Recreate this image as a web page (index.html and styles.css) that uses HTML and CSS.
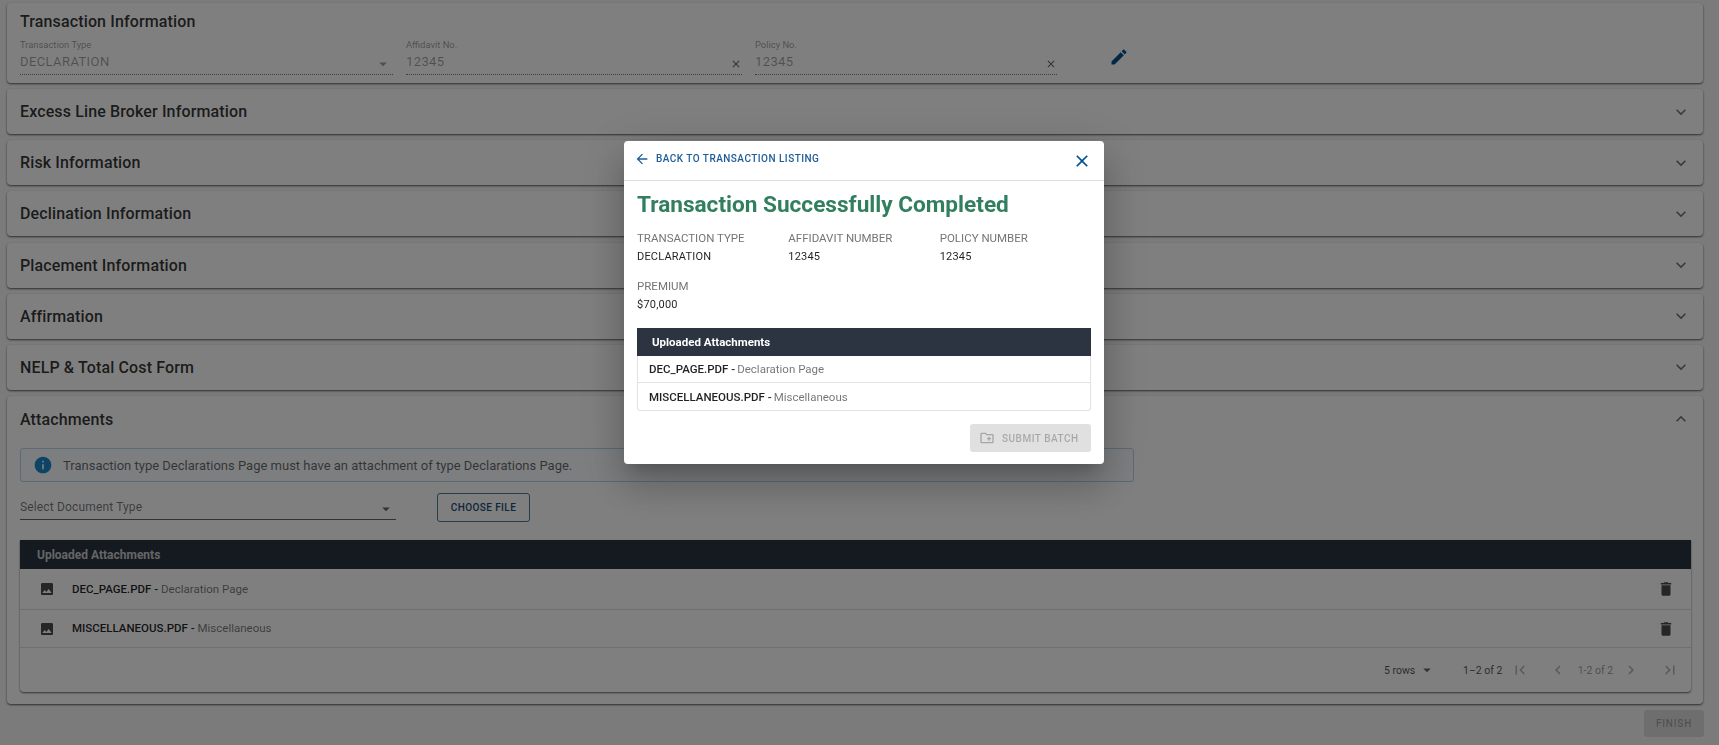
FILE: index.html
```html
<!DOCTYPE html>
<html lang="en">
<head>
  <meta charset="UTF-8" />
  <meta name="viewport" content="width=device-width, initial-scale=1.0"/>
  <title>Transaction</title>
  <link rel="stylesheet" href="styles.css">
</head>
<body>
  <div class="page">
    <section class="panel panel-first">
      <h2 class="panel-title first-title">Transaction Information</h2>
      <div class="fields">
        <div class="field field-type">
          <label>Transaction Type</label>
          <div class="field-value">
            <span>DECLARATION</span>
            <svg class="ico-caret" viewBox="0 0 24 24"><path d="M7 10l5 5 5-5z"/></svg>
          </div>
        </div>
        <div class="field field-affidavit">
          <label>Affidavit No.</label>
          <div class="field-value">
            <span>12345</span>
            <svg class="ico-clear" viewBox="0 0 24 24"><path d="M19 6.41L17.59 5 12 10.59 6.41 5 5 6.41 10.59 12 5 17.59 6.41 19 12 13.41 17.59 19 19 17.59 13.41 12z"/></svg>
          </div>
        </div>
        <div class="field field-policy">
          <label>Policy No.</label>
          <div class="field-value">
            <span>12345</span>
            <svg class="ico-clear" viewBox="0 0 24 24"><path d="M19 6.41L17.59 5 12 10.59 6.41 5 5 6.41 10.59 12 5 17.59 6.41 19 12 13.41 17.59 19 19 17.59 13.41 12z"/></svg>
          </div>
        </div>
        <svg class="ico-edit" viewBox="0 0 24 24"><path d="M3 17.25V21h3.75L17.81 9.94l-3.75-3.75L3 17.25zM20.71 7.04c.39-.39.39-1.02 0-1.41l-2.34-2.34c-.39-.39-1.02-.39-1.41 0l-1.83 1.83 3.75 3.75 1.83-1.83z"/></svg>
      </div>
    </section>

    <section class="panel panel-closed"><h2 class="panel-title">Excess Line Broker Information</h2><svg class="ico-expand" viewBox="0 0 24 24"><path d="M16.59 8.59L12 13.17 7.41 8.59 6 10l6 6 6-6z"/></svg></section>
    <section class="panel panel-closed"><h2 class="panel-title">Risk Information</h2><svg class="ico-expand" viewBox="0 0 24 24"><path d="M16.59 8.59L12 13.17 7.41 8.59 6 10l6 6 6-6z"/></svg></section>
    <section class="panel panel-closed"><h2 class="panel-title">Declination Information</h2><svg class="ico-expand" viewBox="0 0 24 24"><path d="M16.59 8.59L12 13.17 7.41 8.59 6 10l6 6 6-6z"/></svg></section>
    <section class="panel panel-closed"><h2 class="panel-title">Placement Information</h2><svg class="ico-expand" viewBox="0 0 24 24"><path d="M16.59 8.59L12 13.17 7.41 8.59 6 10l6 6 6-6z"/></svg></section>
    <section class="panel panel-closed"><h2 class="panel-title">Affirmation</h2><svg class="ico-expand" viewBox="0 0 24 24"><path d="M16.59 8.59L12 13.17 7.41 8.59 6 10l6 6 6-6z"/></svg></section>
    <section class="panel panel-closed"><h2 class="panel-title">NELP &amp; Total Cost Form</h2><svg class="ico-expand" viewBox="0 0 24 24"><path d="M16.59 8.59L12 13.17 7.41 8.59 6 10l6 6 6-6z"/></svg></section>

    <section class="panel panel-open">
      <div class="panel-closed open-head"><h2 class="panel-title">Attachments</h2><svg class="ico-expand" viewBox="0 0 24 24"><path d="M12 8l-6 6 1.41 1.41L12 10.83l4.59 4.58L18 14z"/></svg></div>
      <div class="alert">
        <svg class="ico-info" viewBox="0 0 24 24"><path d="M12 2C6.48 2 2 6.48 2 12s4.48 10 10 10 10-4.48 10-10S17.52 2 12 2zm1 15h-2v-6h2v6zm0-8h-2V7h2v2z"/></svg>
        <span>Transaction type Declarations Page must have an attachment of type Declarations Page.</span>
      </div>
      <div class="upload-row">
        <div class="doc-select">
          <span>Select Document Type</span>
          <svg class="ico-caret dark" viewBox="0 0 24 24"><path d="M7 10l5 5 5-5z"/></svg>
        </div>
        <button class="choose-btn">CHOOSE FILE</button>
      </div>
      <div class="table">
        <div class="table-head">Uploaded Attachments</div>
        <div class="table-row row-one">
          <svg class="ico-image" viewBox="0 0 24 24"><path d="M21 19V5c0-1.1-.9-2-2-2H5c-1.1 0-2 .9-2 2v14c0 1.1.9 2 2 2h14c1.1 0 2-.9 2-2zM8.5 13.5l2.5 3.01L14.5 12l4.5 6H5l3.5-4.5z"/></svg>
          <span class="file-text"><b>DEC_PAGE.PDF -</b> <i>Declaration Page</i></span>
          <svg class="ico-trash" viewBox="0 0 24 24"><path d="M6 19c0 1.1.9 2 2 2h8c1.1 0 2-.9 2-2V7H6v12zM19 4h-3.5l-1-1h-5l-1 1H5v2h14V4z"/></svg>
        </div>
        <div class="table-row row-two">
          <svg class="ico-image" viewBox="0 0 24 24"><path d="M21 19V5c0-1.1-.9-2-2-2H5c-1.1 0-2 .9-2 2v14c0 1.1.9 2 2 2h14c1.1 0 2-.9 2-2zM8.5 13.5l2.5 3.01L14.5 12l4.5 6H5l3.5-4.5z"/></svg>
          <span class="file-text"><b>MISCELLANEOUS.PDF -</b> <i>Miscellaneous</i></span>
          <svg class="ico-trash" viewBox="0 0 24 24"><path d="M6 19c0 1.1.9 2 2 2h8c1.1 0 2-.9 2-2V7H6v12zM19 4h-3.5l-1-1h-5l-1 1H5v2h14V4z"/></svg>
        </div>
        <div class="table-foot">
          <span class="rows-label">5 rows</span>
          <svg class="ico-caret dark rows-caret" viewBox="0 0 24 24"><path d="M7 10l5 5 5-5z"/></svg>
          <span class="range">1–2 of 2</span>
          <svg class="ico-page first-page" viewBox="0 0 24 24"><path d="M18.41 16.59L13.82 12l4.59-4.59L17 6l-6 6 6 6zM6 6h2v12H6z"/></svg>
          <svg class="ico-page prev-page" viewBox="0 0 24 24"><path d="M15.41 7.41L14 6l-6 6 6 6 1.41-1.41L10.83 12z"/></svg>
          <span class="range-small">1-2 of 2</span>
          <svg class="ico-page next-page" viewBox="0 0 24 24"><path d="M10 6L8.59 7.41 13.17 12l-4.58 4.59L10 18l6-6z"/></svg>
          <svg class="ico-page last-page" viewBox="0 0 24 24"><path d="M5.59 7.41L10.18 12l-4.59 4.59L7 18l6-6-6-6zM16 6h2v12h-2z"/></svg>
        </div>
      </div>
    </section>

    <div class="page-actions"><button class="finish-btn" disabled>FINISH</button></div>
  </div>

  <div class="overlay">
    <div class="modal">
      <div class="modal-head">
        <svg class="ico-back" viewBox="0 0 24 24"><path d="M20 11H7.83l5.59-5.59L12 4l-8 8 8 8 1.41-1.41L7.83 13H20v-2z"/></svg>
        <a class="back-link">BACK TO TRANSACTION LISTING</a>
        <svg class="ico-close" viewBox="0 0 24 24"><path d="M19 6.41L17.59 5 12 10.59 6.41 5 5 6.41 10.59 12 5 17.59 6.41 19 12 13.41 17.59 19 19 17.59 13.41 12z"/></svg>
      </div>
      <div class="modal-body">
        <h1 class="success">Transaction Successfully Completed</h1>
        <div class="summary">
          <div><p class="sum-label">TRANSACTION TYPE</p><p class="sum-value">DECLARATION</p></div>
          <div><p class="sum-label">AFFIDAVIT NUMBER</p><p class="sum-value">12345</p></div>
          <div><p class="sum-label">POLICY NUMBER</p><p class="sum-value">12345</p></div>
          <div><p class="sum-label">PREMIUM</p><p class="sum-value">$70,000</p></div>
        </div>
        <div class="modal-table">
          <div class="modal-table-head">Uploaded Attachments</div>
          <div class="modal-row"><b>DEC_PAGE.PDF -</b> <i>Declaration Page</i></div>
          <div class="modal-row"><b>MISCELLANEOUS.PDF -</b> <i>Miscellaneous</i></div>
        </div>
        <div class="modal-actions">
          <button class="submit-btn" disabled>
            <svg class="ico-folder" viewBox="0 0 24 24"><path d="M20 6h-8l-2-2H4c-1.1 0-2 .9-2 2v12c0 1.1.9 2 2 2h16c1.1 0 2-.9 2-2V8c0-1.1-.9-2-2-2zm0 12H4V6h5.17l2 2H20v10zm-8-4h2v2h2v-2h2v-2h-2v-2h-2v2h-2z"/></svg>
            SUBMIT BATCH
          </button>
        </div>
      </div>
    </div>
  </div>
</body>
</html>
```

FILE: styles.css
```css
* {
  margin: 0;
  padding: 0;
  box-sizing: border-box;
}

html, body {
  height: 100%;
  overflow: hidden;
  background: #f7f7f7;
  font-family: Roboto, "Liberation Sans", sans-serif;
  color: rgba(0, 0, 0, 0.87);
}

svg {
  display: block;
  flex: none;
  fill: currentColor;
}

.page {
  padding: 3px 16px 0 7px;
  display: flex;
  flex-direction: column;
  gap: 6.2px;
}

/* panels */
.panel {
  background: #fff;
  border-radius: 4px;
  box-shadow: 0 1px 2px rgba(0, 0, 0, 0.55), 0 1px 3px rgba(0, 0, 0, 0.12);
}

.panel-first {
  height: 80px;
  padding: 9px 12px 0 13px;
  margin-bottom: -0.2px;
}

.panel-title {
  font-size: 16px;
  line-height: 20px;
  font-weight: 500;
  letter-spacing: 0.13px;
  color: rgba(0, 0, 0, 0.8);
}

.panel-closed {
  height: 45px;
  padding: 0 12px 0 13px;
  display: flex;
  align-items: center;
  justify-content: space-between;
}

.panel-closed .panel-title {
  padding-top: 1px;
}

.open-head {
  height: 46px;
  padding: 0 0 0 1px;
}

.ico-expand {
  width: 20px;
  height: 20px;
  color: #757575;
}

.panel-open {
  height: 308px;
  padding: 0 12px;
}

/* first panel fields */
.fields {
  display: flex;
  align-items: flex-start;
  margin-top: 7px;
}

.field label {
  display: block;
  font-size: 9.4px;
  line-height: 12px;
  color: rgba(0, 0, 0, 0.4);
}

.field-value {
  height: 24px;
  border-bottom: 1px dotted rgba(0, 0, 0, 0.5);
  display: flex;
  align-items: flex-start;
  justify-content: space-between;
  font-size: 13px;
  line-height: 22px;
  letter-spacing: 0.4px;
  color: rgba(0, 0, 0, 0.38);
}

.field-type { width: 373px; }
.field-affidavit { width: 336px; margin-left: 13px; }
.field-policy { width: 302px; margin-left: 13px; }

.ico-caret {
  width: 18px;
  height: 18px;
  color: rgba(0, 0, 0, 0.38);
  margin-top: 3.5px;
  margin-right: 1px;
}

.ico-caret.dark {
  color: rgba(0, 0, 0, 0.6);
}

.ico-clear {
  width: 12px;
  height: 12px;
  margin-top: 7px;
  color: rgba(0, 0, 0, 0.6);
}

.ico-edit {
  width: 20px;
  height: 20px;
  margin-left: 52px;
  margin-top: 8px;
  color: #00518f;
}

/* attachments */
.alert {
  width: 1114px;
  height: 34px;
  margin: 6px 0 0 1px;
  padding: 0 12px;
  border: 1px solid #b7d4e6;
  border-radius: 3px;
  background: #f8fcfe;
  display: flex;
  align-items: center;
  gap: 10px;
  font-size: 13px;
  color: rgba(0, 0, 0, 0.6);
}

.ico-info {
  width: 20px;
  height: 20px;
  color: #1a88cc;
}

.upload-row {
  display: flex;
  margin: 11px 0 0 1px;
}

.doc-select {
  width: 376px;
  height: 27px;
  border-bottom: 1px solid rgba(0, 0, 0, 0.6);
  display: flex;
  align-items: center;
  justify-content: space-between;
  font-size: 12px;
  letter-spacing: 0.15px;
  color: rgba(0, 0, 0, 0.55);
}

.doc-select span { padding-top: 2px; }

.doc-select .ico-caret {
  margin-right: 1px;
  margin-top: 6px;
}

.choose-btn {
  width: 93px;
  height: 29px;
  margin-left: 41px;
  border: 1px solid #4a7a9e;
  border-radius: 3px;
  background: transparent;
  font-family: inherit;
  font-size: 10px;
  font-weight: 500;
  letter-spacing: 0.4px;
  color: #1a4d78;
}

.table {
  margin: 18px 0 0 1px;
  width: 1671px;
  border-radius: 0 0 4px 4px;
  box-shadow: 0 1px 2px rgba(0, 0, 0, 0.6);
}

.table-head {
  height: 29px;
  padding-left: 17px;
  display: flex;
  align-items: center;
  background: #2b3440;
  font-size: 12px;
  font-weight: 700;
  color: rgba(255, 255, 255, 0.75);
}

.table-row {
  display: flex;
  align-items: center;
  padding: 0 16px 0 19px;
  border-bottom: 1px solid rgba(0, 0, 0, 0.13);
  font-size: 11.5px;
}

.row-one { height: 41px; }
.row-two { height: 38px; }

.ico-image {
  width: 16px;
  height: 16px;
  color: rgba(0, 0, 0, 0.7);
}

.file-text {
  flex: 1;
  margin-left: 17px;
}

.file-text b, .modal-row b {
  font-weight: 500;
}

.file-text i, .modal-row i {
  font-style: normal;
  color: rgba(0, 0, 0, 0.55);
}

.row-two .file-text { margin-top: -2px; }

.ico-trash {
  width: 18px;
  height: 18px;
  color: rgba(0, 0, 0, 0.7);
}

.table-foot {
  height: 44px;
  display: flex;
  align-items: center;
  padding-left: 1364px;
  font-size: 11px;
  white-space: nowrap;
  color: rgba(0, 0, 0, 0.7);
}

.rows-label { width: 29px; font-size: 10.5px; }

.rows-caret { margin: 0 0 0 5px; }

.range { margin-left: 27px; width: 40px; font-size: 10.5px; }

.ico-page {
  width: 18px;
  height: 18px;
  color: rgba(0, 0, 0, 0.3);
}

.first-page { margin-left: 8px; }
.prev-page { margin-left: 20px; }
.range-small { margin-left: 10.7px; width: 38px; color: rgba(0, 0, 0, 0.42); font-size: 10.5px; }
.next-page { margin-left: 6px; }
.last-page { margin-left: 21px; }

.page-actions {
  display: flex;
  justify-content: flex-end;
  margin-right: -1px;
}

.finish-btn {
  width: 60px;
  height: 27px;
  border: none;
  border-radius: 3px;
  background: #dcdcdc;
  font-family: inherit;
  font-size: 10px;
  font-weight: 500;
  letter-spacing: 0.8px;
  color: rgba(0, 0, 0, 0.28);
}

/* modal */
.overlay {
  position: fixed;
  top: 0;
  left: 0;
  width: 100%;
  height: 100%;
  padding: 141px 0 0 624px;
  background: rgba(0, 0, 0, 0.5);
}

.modal {
  width: 480px;
  height: 323px;
  background: #fff;
  border-radius: 4px;
  box-shadow: 0 11px 15px -7px rgba(0, 0, 0, 0.2), 0 24px 38px 3px rgba(0, 0, 0, 0.14), 0 9px 46px 8px rgba(0, 0, 0, 0.12);
}

.modal-head {
  height: 40px;
  padding: 0 12px 0 10px;
  border-bottom: 1px solid #dedede;
  display: flex;
  align-items: center;
}

.ico-back {
  width: 16px;
  height: 16px;
  margin-top: -4px;
  color: #1d5c96;
}

.back-link {
  margin: -4px 0 0 6px;
  flex: 1;
  font-size: 10px;
  font-weight: 500;
  letter-spacing: 0.47px;
  color: #1d5c96;
}

.ico-close {
  width: 20px;
  height: 20px;
  margin-top: 1px;
  color: #00518f;
}

.modal-body {
  padding: 0 13px;
}

.success {
  margin-top: 11px;
  font-size: 22.6px;
  line-height: 26px;
  font-weight: 700;
  color: #317f5f;
}

.summary {
  display: grid;
  grid-template-columns: repeat(3, 1fr);
  row-gap: 13px;
  margin-top: 12px;
}

.sum-label {
  font-size: 11.5px;
  line-height: 16px;
  color: #757575;
}

.sum-value {
  margin-top: 3px;
  font-size: 11px;
  line-height: 16px;
  letter-spacing: 0.2px;
  color: rgba(0, 0, 0, 0.87);
}

.modal-table {
  margin-top: 15px;
  border: 1px solid #e2e2e2;
  border-top: none;
  border-radius: 0 0 3px 3px;
}

.modal-table-head {
  height: 28px;
  margin: 0 -1px;
  padding-left: 15px;
  display: flex;
  align-items: center;
  background: #2b3440;
  font-size: 11.5px;
  font-weight: 700;
  color: #fff;
}

.modal-row {
  height: 27px;
  padding-left: 11px;
  display: flex;
  align-items: center;
  gap: 2px;
  font-size: 11.5px;
  border-bottom: 1px solid #e2e2e2;
}

.modal-row:last-child {
  border-bottom: none;
}

.modal-actions {
  display: flex;
  justify-content: flex-end;
  margin-top: 13px;
}

.submit-btn {
  width: 121px;
  height: 28px;
  padding-left: 9px;
  border: none;
  border-radius: 3px;
  background: #e0e0e0;
  display: flex;
  align-items: center;
  gap: 7px;
  font-family: inherit;
  font-size: 10px;
  font-weight: 500;
  letter-spacing: 0.5px;
  color: rgba(0, 0, 0, 0.26);
}

.ico-folder {
  width: 16px;
  height: 16px;
}
```
